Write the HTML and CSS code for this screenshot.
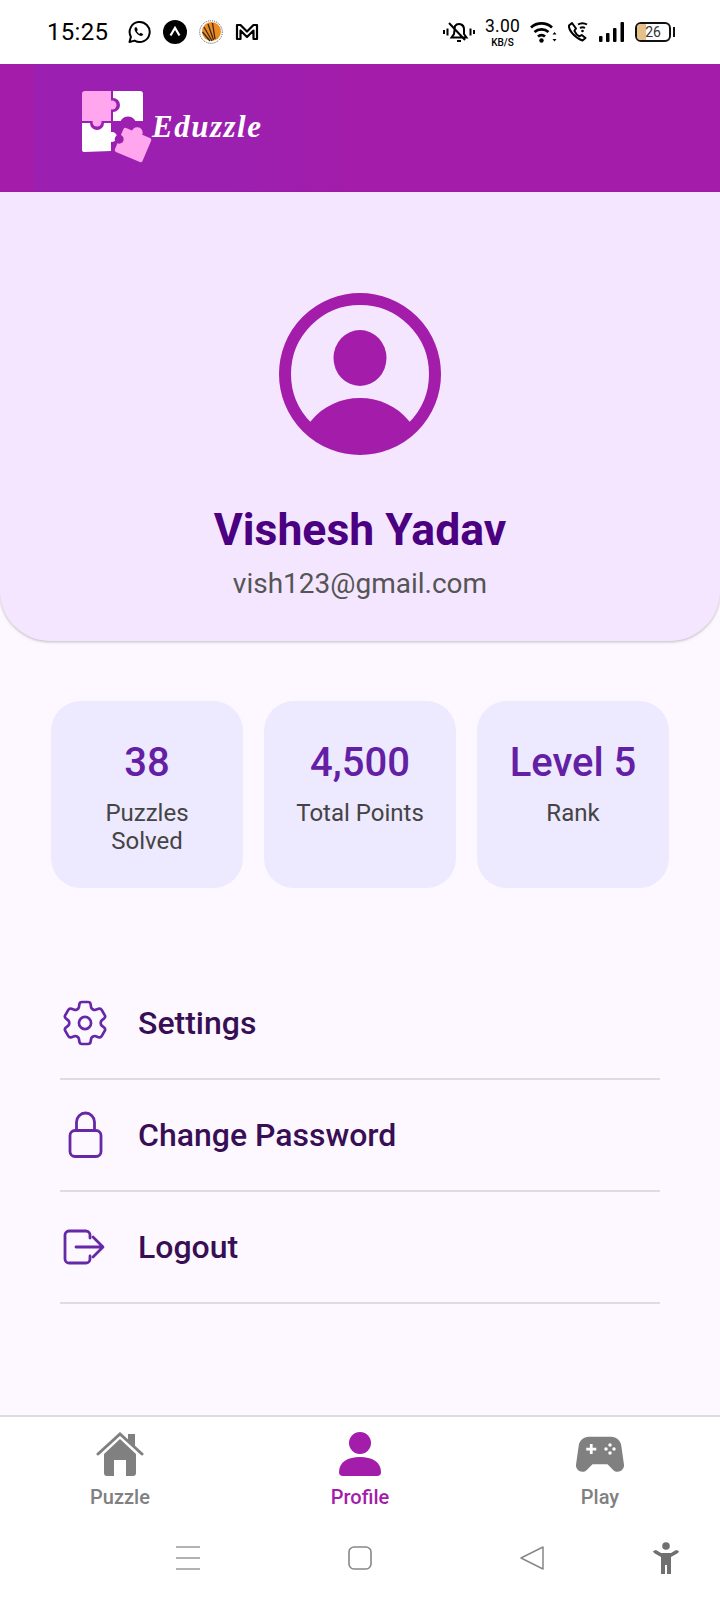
FILE: index.html
```html
<!DOCTYPE html>
<html lang="en">
<head>
    <meta charset="UTF-8">
    <meta name="viewport" content="width=device-width, initial-scale=1.0">
    <title>Eduzzle Profile</title>
    <link rel="stylesheet" href="styles.css">
</head>
<body>
    <div class="status-bar">
        <span class="clock">15:25</span>
        <div class="status-apps">
            <svg width="24" height="24" viewBox="0 0 24 24" fill="none" stroke="#000" stroke-width="2"><path d="M2.5 22l1.4-5.2A10 10 0 1 1 7.6 20.6z" stroke-linejoin="round"/><path d="M8.2 7.2c-1 1-1 2.6.4 4.8 1.5 2.3 3.600 3.900 5.400 3.900 1 0 2-.7 2.200-1.700l-2.400-1.400-1.100 1c-1.200-.5-2.300-1.700-2.800-2.900l.9-1-1.200-2.600z" fill="#000" stroke="none"/></svg>
            <svg width="24" height="24" viewBox="0 0 24 24"><circle cx="12" cy="12" r="12" fill="#000"/><path d="M7.500 15.500L12 8l4.500 7.500" fill="none" stroke="#fff" stroke-width="2.200"/></svg>
            <svg width="24" height="24" viewBox="0 0 24 24"><circle cx="12" cy="12" r="11.300" fill="#fff" stroke="#555" stroke-width="1" stroke-dasharray="1 1"/><circle cx="12.500" cy="11.500" r="9.500" fill="#ee8a22"/><path d="M3.500 12L11 21M5 7l8 14M9 4l5.500 16M13.500 3l2.500 16" stroke="#3b2a1c" stroke-width="1.300"/></svg>
            <svg width="24" height="20" viewBox="0 0 24 20" fill="none" stroke="#000" stroke-width="2.200" stroke-linejoin="round"><path d="M2 3h3.500L12 9.500 18.500 3H22v14h-3.500V8.500L12 15 5.500 8.500V17H2z"/></svg>
        </div>
        <div class="status-system">
            <svg width="32" height="24" viewBox="0 0 32 24" fill="none" stroke="#000" stroke-width="2"><path d="M1 10v4M4.500 8.500v7M27.500 8.500v7M31 10v4"/><path d="M8.500 17.500h15l-2.500-3.500V9a5 5 0 0 0-9-3l-1 8zM6 3l16 17M14 21h4"/></svg>
            <div class="speed"><span class="speed-num">3.00</span><span class="speed-unit">KB/S</span></div>
            <svg width="27" height="22" viewBox="0 0 27 22" fill="none" stroke="#000" stroke-width="2.800"><path d="M1 6.500c6-5.500 15-5.500 21 0M4.500 11c4-3.500 10-3.500 14 0M8 15.500c2-1.700 5-1.700 7 0"/><circle cx="11.500" cy="19.500" r="2.200" fill="#000" stroke="none"/><path d="M24.500 11l-2 2.500h4zM24.500 20.500l-2-2.500h4z" fill="#000" stroke="none"/></svg>
            <svg width="22" height="22" viewBox="0 0 22 22" fill="none" stroke="#000" stroke-width="2"><path d="M5 2L2 4.500c-.5 4 5 12 13.500 15l3-2.500-3.800-3-2.300 1.300c-2-1-4-3.300-5-5.500L9 7.500z" stroke-linejoin="round"/><path d="M11 3.500c3-1.800 6-1.800 9 0M13 7c2-1 3.200-1 5 0"/><circle cx="15.500" cy="10" r="1.300" fill="#000" stroke="none"/></svg>
            <svg width="26" height="20" viewBox="0 0 26 20" fill="#000"><rect x="0" y="14" width="3.500" height="6" rx="1"/><rect x="7" y="11" width="3.500" height="9" rx="1"/><rect x="14" y="6" width="3.500" height="14" rx="1"/><rect x="21.500" y="0" width="3.500" height="20" rx="1"/></svg>
            <div class="battery"><div class="battery-fill"></div><span class="battery-num">26</span></div>
        </div>
    </div>

    <header class="app-header">
        <svg class="logo" width="72" height="74" viewBox="0 0 72 74">
            <path d="M31 1h27a3 3 0 0 1 3 3v27H31z" fill="#fff"/>
            <path d="M0 33h29v28l-27 1a2 2 0 0 1-2-2z" fill="#fff"/>
            <circle cx="31" cy="15" r="7" fill="#9c1fb0"/>
            <circle cx="15" cy="33" r="7" fill="#9c1fb0"/>
            <path d="M3 1h26v30H0V4a3 3 0 0 1 3-3z" fill="#ffa6ee"/>
            <circle cx="30" cy="15" r="4.500" fill="#ffa6ee"/>
            <circle cx="15" cy="32" r="4.500" fill="#ffa6ee"/>
            <circle cx="30" cy="47" r="5" fill="#fff"/>
            <circle cx="46" cy="35" r="8.500" fill="#9c1fb0"/>
            <g transform="rotate(23 51 55)">
                <rect x="36" y="42" width="30" height="26" rx="2" fill="#ffa6ee"/>
                <circle cx="50" cy="42" r="5.500" fill="#ffa6ee"/>
                <circle cx="36" cy="55" r="4.500" fill="#9c1fb0"/>
            </g>
        </svg>
        <span class="brand">Eduzzle</span>
    </header>

    <section class="hero">
        <svg class="avatar" width="162" height="162" viewBox="0 0 162 162">
            <circle cx="81" cy="81" r="75" fill="none" stroke="#a31caa" stroke-width="12"/>
            <ellipse cx="81" cy="65" rx="26.500" ry="28" fill="#a31caa"/>
            <path d="M32 128C44 113 62 105 81 105S118 113 130 128L132 130A71 71 0 0 1 30 130z" fill="#a31caa"/>
        </svg>
        <h1 class="user-name">Vishesh Yadav</h1>
        <p class="user-email">vish123@gmail.com</p>
    </section>

    <section class="stats">
        <div class="stat-card">
            <div class="stat-value">38</div>
            <div class="stat-label">Puzzles Solved</div>
        </div>
        <div class="stat-card">
            <div class="stat-value">4,500</div>
            <div class="stat-label">Total Points</div>
        </div>
        <div class="stat-card">
            <div class="stat-value">Level 5</div>
            <div class="stat-label">Rank</div>
        </div>
    </section>

    <section class="menu">
        <div class="menu-row">
            <svg class="menu-icon" width="56" height="56" viewBox="0 0 24 24" fill="none" stroke="#6528a6" stroke-width="1.150" stroke-linejoin="round"><path d="M9.594 3.940c.09-.542.56-.94 1.110-.94h2.593c.55 0 1.020.398 1.110.94l.213 1.281c.063.374.313.686.645.870.074.04.147.083.22.127.324.196.72.257 1.075.124l1.217-.456a1.125 1.125 0 0 1 1.370.49l1.296 2.247a1.125 1.125 0 0 1-.26 1.431l-1.003.827c-.293.24-.438.613-.431.992a6.759 6.759 0 0 1 0 .255c-.007.378.138.75.43.99l1.005.828c.424.35.534.954.26 1.430l-1.298 2.247a1.125 1.125 0 0 1-1.369.491l-1.217-.456c-.355-.133-.75-.072-1.076.124a6.570 6.570 0 0 1-.22.128c-.331.183-.581.495-.644.869l-.213 1.280c-.09.543-.56.941-1.110.941h-2.594c-.55 0-1.020-.398-1.110-.94l-.213-1.281c-.062-.374-.312-.686-.644-.87a6.520 6.520 0 0 1-.22-.127c-.325-.196-.72-.257-1.076-.124l-1.217.456a1.125 1.125 0 0 1-1.369-.49l-1.297-2.247a1.125 1.125 0 0 1 .26-1.431l1.004-.827c.292-.24.437-.613.43-.992a6.932 6.932 0 0 1 0-.255c.007-.378-.138-.75-.43-.99l-1.004-.828a1.125 1.125 0 0 1-.26-1.430l1.297-2.247a1.125 1.125 0 0 1 1.370-.491l1.216.456c.356.133.751.072 1.076-.124.072-.044.146-.087.22-.128.332-.183.582-.495.644-.869l.214-1.281z"/><circle cx="12" cy="12" r="2.600"/></svg>
            <span class="menu-text">Settings</span>
        </div>
        <div class="menu-row">
            <svg class="menu-icon" width="56" height="56" viewBox="0 0 56 56" fill="none" stroke="#6528a6" stroke-width="2.800"><rect x="13" y="23.500" width="31" height="26" rx="5"/><path d="M19.500 23.500V15a9 9 0 0 1 18 0v8.500"/></svg>
            <span class="menu-text">Change Password</span>
        </div>
        <div class="menu-row">
            <svg class="menu-icon" width="56" height="56" viewBox="0 0 56 56" fill="none" stroke="#6528a6" stroke-width="2.800" stroke-linecap="round" stroke-linejoin="round"><path d="M29 12H12a4 4 0 0 0-4 4v24a4 4 0 0 0 4 4h17a4 4 0 0 0 4-4v-3M33 19v-3a4 4 0 0 0-4-4"/><path d="M19 28h26M36 18l10 10-10 10"/></svg>
            <span class="menu-text">Logout</span>
        </div>
    </section>

    <nav class="bottom-nav">
        <div class="nav-item">
            <svg width="48" height="44" viewBox="0 0 48 44" fill="#808080"><path d="M32 2h7v14l-7-6z"/><path d="M8 22L24 7l16 15v19a3 3 0 0 1-3 3h-7V28H18v16h-7a3 3 0 0 1-3-3z"/><path d="M2 22L24 2l22 20" fill="none" stroke="#808080" stroke-width="3" stroke-linecap="round"/></svg>
            <span class="nav-label">Puzzle</span>
        </div>
        <div class="nav-item nav-active">
            <svg width="42" height="44" viewBox="0 0 42 44" fill="#a31caa"><circle cx="21" cy="11" r="11"/><path d="M0 40C0 30 9 25 21 25s21 5 21 15a4 4 0 0 1-4 4H4a4 4 0 0 1-4-4z"/></svg>
            <span class="nav-label">Profile</span>
        </div>
        <div class="nav-item">
            <svg width="48" height="44" viewBox="2.400 3.100 19.200 17.600"><path d="M21.580 16.090l-1.090-7.660C20.210 6.460 18.520 5 16.530 5H7.470C5.480 5 3.790 6.460 3.510 8.430l-1.090 7.660C2.200 17.630 3.390 19 4.940 19c.68 0 1.320-.27 1.800-.75L9 16h6l2.250 2.250c.48.48 1.130.75 1.800.75 1.560 0 2.750-1.370 2.530-2.910z" fill="#808080"/><path d="M6.500 9.900h4M8.500 7.900v4" stroke="#fff" stroke-width="1.100"/><g fill="#fff"><circle cx="16" cy="8.300" r=".7"/><circle cx="16" cy="11.500" r=".7"/><circle cx="14.400" cy="9.900" r=".7"/><circle cx="17.600" cy="9.900" r=".7"/></g></svg>
            <span class="nav-label">Play</span>
        </div>
    </nav>

    <div class="system-nav">
        <svg width="24" height="24" viewBox="0 0 24 24" stroke="#999" stroke-width="1.500"><path d="M0 1h24M0 12h24M0 23h24"/></svg>
        <svg width="24" height="24" viewBox="0 0 24 24" fill="none" stroke="#888" stroke-width="1.600"><rect x="1" y="1" width="22" height="22" rx="5"/></svg>
        <svg width="24" height="24" viewBox="0 0 24 24" fill="none" stroke="#888" stroke-width="1.500" stroke-linejoin="round"><path d="M1 12L23 1v22z"/></svg>
        <svg width="26" height="32" viewBox="0 0 26 32" fill="#707070"><circle cx="13" cy="4" r="3.800"/><path d="M0 9l3 -1 5 3h10l5-3 3 1-1 2-7 4v17h-4v-9h-2v9H8V15L1 11z"/></svg>
    </div>
</body>
</html>
```
FILE: styles.css
```css
* {
    box-sizing: border-box;
}
body {
    margin: 0;
    width: 720px;
    height: 1600px;
    display: flex;
    flex-direction: column;
    font-family: Roboto, sans-serif;
    background-color: #fdf8ff;
    overflow: hidden;
}
svg {
    display: block;
}

/* status bar */
.status-bar {
    height: 64px;
    flex-shrink: 0;
    background-color: #fff;
    display: flex;
    align-items: center;
    padding-left: 47px;
    color: #000;
}
.clock {
    font-size: 24px;
    width: 80px;
    letter-spacing: 0.3px;
}
.status-apps {
    display: flex;
    align-items: center;
    gap: 12px;
}
.status-system {
    display: flex;
    align-items: center;
    gap: 10px;
    margin-left: auto;
    padding-right: 49px;
}
.speed {
    display: flex;
    flex-direction: column;
    align-items: center;
}
.speed-num {
    font-size: 17.500px;
    line-height: 21px;
    letter-spacing: 0.200px;
}
.speed-unit {
    font-size: 10px;
    font-weight: 500;
    line-height: 12px;
}
.battery {
    position: relative;
    width: 36px;
    height: 20px;
    border: 2px solid #111;
    border-radius: 6px;
    overflow: visible;
    font-size: 14px;
    text-align: center;
    line-height: 16px;
    color: #333;
}
.battery::after {
    content: "";
    position: absolute;
    right: -6px;
    top: 3px;
    width: 2px;
    height: 10px;
    background-color: #111;
}
.battery-fill {
    position: absolute;
    left: 0;
    top: 0;
    bottom: 0;
    width: 9px;
    background-color: #e6c08a;
    border-radius: 4px 0 0 4px;
}
.battery-num {
    position: relative;
}

/* app header */
.app-header {
    height: 128px;
    flex-shrink: 0;
    display: flex;
    align-items: center;
    padding: 0 0 2px 82px;
    background: linear-gradient(90deg, #a31caa 0 34px, #9b1fb0 34px, #9c20b0 230px, #a31caa 350px);
}
.brand {
    font-family: "Liberation Serif", serif;
    font-style: italic;
    font-weight: 700;
    font-size: 31px;
    letter-spacing: 1.500px;
    color: #fff;
    margin-left: -2px;
}

/* profile card */
.hero {
    height: 449px;
    flex-shrink: 0;
    background-color: #f4e6ff;
    border-radius: 0 0 50px 50px;
    box-shadow: 0 1px 3px rgba(0, 0, 0, 0.25);
    display: flex;
    flex-direction: column;
    align-items: center;
    padding-top: 101px;
}
.user-name {
    margin: 47px 0 0;
    font-size: 44.500px;
    line-height: 56px;
    font-weight: 700;
    color: #4b0082;
}
.user-email {
    margin: 10px 0 0;
    font-size: 28px;
    line-height: 32px;
    color: #555;
}

/* stats */
.stats {
    display: flex;
    gap: 21px;
    padding: 60px 51px 0;
}
.stat-card {
    width: 192px;
    height: 187px;
    background-color: #ede9fe;
    border-radius: 30px;
    padding: 38px 8px 0;
    text-align: center;
}
.stat-value {
    font-size: 40px;
    line-height: 48px;
    font-weight: 500;
    color: #6420a4;
}
.stat-label {
    margin-top: 12px;
    font-size: 24px;
    line-height: 28px;
    color: #444;
    padding: 0 16px;
}

/* menu */
.menu {
    padding: 80px 60px 0;
}
.menu-row {
    height: 112px;
    display: flex;
    align-items: center;
    gap: 25px;
    border-bottom: 2px solid #ddd;
}
.menu-icon {
    margin-left: -3px;
    width: 56px;
}
.menu-text {
    font-size: 32px;
    font-weight: 500;
    color: #380f54;
}

/* bottom navigation */
.bottom-nav {
    margin-top: auto;
    height: 105px;
    flex-shrink: 0;
    background-color: #fff;
    border-top: 2px solid #ddd;
    display: grid;
    grid-template-columns: repeat(3, 240px);
    padding-top: 15px;
}
.nav-item {
    display: flex;
    flex-direction: column;
    align-items: center;
    gap: 9px;
}
.nav-label {
    font-size: 20px;
    line-height: 24px;
    font-weight: 500;
    color: #808080;
}
.nav-active .nav-label {
    color: #a31caa;
}

/* android navigation */
.system-nav {
    height: 80px;
    flex-shrink: 0;
    background-color: #fff;
    display: grid;
    grid-template-columns: 172px 172px 133px 26px;
    align-items: center;
    padding: 0 0 5px 176px;
}
```
